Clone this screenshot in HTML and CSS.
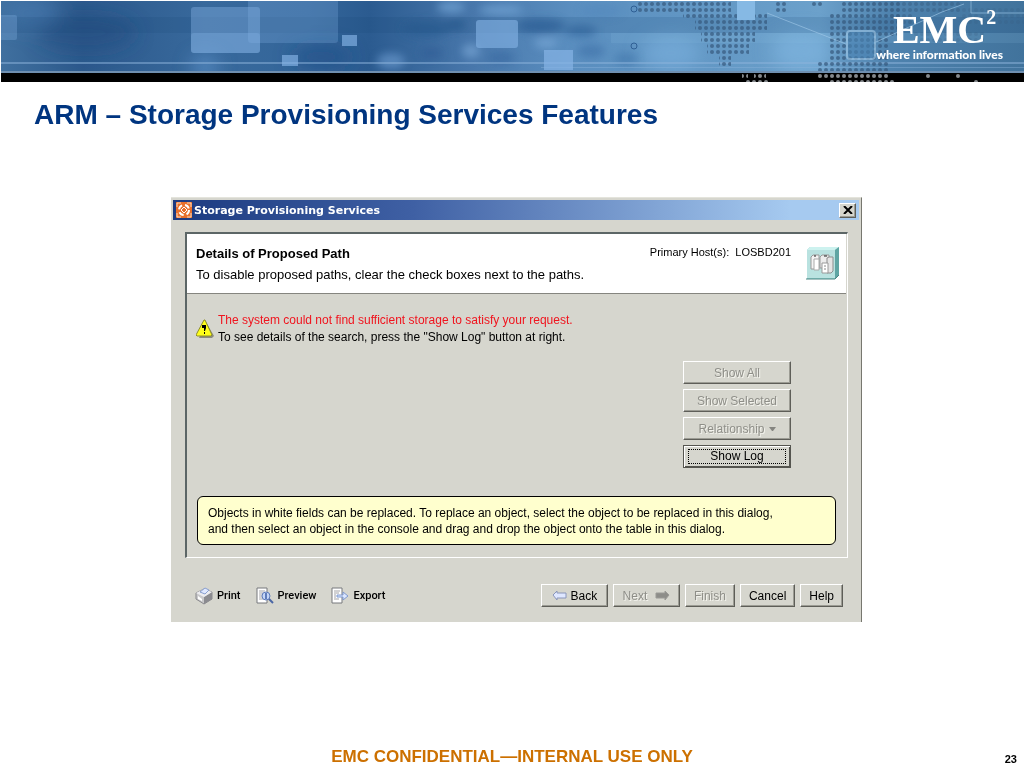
FILE: index.html
```html
<!DOCTYPE html>
<html lang="en">
<head>
    <meta charset="UTF-8">
    <meta name="viewport" content="width=device-width, initial-scale=1.0">
    <title>ARM – Storage Provisioning Services Features</title>
    <link rel="stylesheet" href="styles.css">
</head>
<body>
    <header class="banner">
        <svg class="art" viewBox="0 0 1023 81" preserveAspectRatio="xMaxYMin slice" aria-hidden="true">
            <defs>
                <linearGradient id="sky">
                    <stop offset="0" stop-color="#40709f"/>
                    <stop offset=".08" stop-color="#2c598c"/>
                    <stop offset=".2" stop-color="#38699c"/>
                    <stop offset=".3" stop-color="#34669a"/>
                    <stop offset=".36" stop-color="#2b5b90"/>
                    <stop offset=".46" stop-color="#4877ab"/>
                    <stop offset=".56" stop-color="#5b8fc0"/>
                    <stop offset=".68" stop-color="#6297c4"/>
                    <stop offset=".8" stop-color="#6ca1cb"/>
                    <stop offset=".87" stop-color="#4e82ae"/>
                    <stop offset="1" stop-color="#41739c"/>
                </linearGradient>
                <pattern id="dots" width="6" height="6" patternUnits="userSpaceOnUse">
                    <circle cx="3" cy="3" r="2" fill="#35587c"/>
                </pattern>
                <pattern id="lights" width="6" height="6" patternUnits="userSpaceOnUse">
                    <circle cx="3" cy="3" r="2" fill="#85898d"/>
                </pattern>
                <filter id="soft" x="-50%" y="-50%" width="200%" height="200%"><feGaussianBlur stdDeviation="9"/></filter>
                <filter id="mottle" x="-10%" y="-20%" width="120%" height="140%"><feGaussianBlur stdDeviation="4"/></filter>
            </defs>
            <rect width="1023" height="71" fill="url(#sky)"/>
            <!-- clouds -->
            <g filter="url(#soft)">
                <ellipse cx="30" cy="12" rx="28" ry="16" fill="#4a79b0" opacity=".6"/>
                <ellipse cx="85" cy="32" rx="50" ry="18" fill="#1f4a80" opacity=".5"/>
                <ellipse cx="204" cy="66" rx="14" ry="12" fill="#5c90c8" opacity=".7"/>
                <ellipse cx="320" cy="56" rx="30" ry="12" fill="#1f4d85" opacity=".6"/>
                <ellipse cx="670" cy="52" rx="30" ry="18" fill="#7db2e0" opacity=".6"/>
                <ellipse cx="800" cy="50" rx="30" ry="20" fill="#82b8e2" opacity=".6"/>
            </g>
            <g filter="url(#mottle)" opacity=".7">
                <ellipse cx="390" cy="60" rx="14" ry="8" fill="#6796ca"/>
                <ellipse cx="450" cy="6" rx="14" ry="6" fill="#75a6d6"/>
                <ellipse cx="500" cy="9" rx="22" ry="5" fill="#75a6d6"/>
                <ellipse cx="425" cy="28" rx="24" ry="8" fill="#2b5d93"/>
                <ellipse cx="455" cy="24" rx="10" ry="6" fill="#2b5d93"/>
                <ellipse cx="470" cy="50" rx="9" ry="7" fill="#78a5d4"/>
                <ellipse cx="430" cy="52" rx="12" ry="6" fill="#315f97"/>
                <ellipse cx="500" cy="57" rx="14" ry="6" fill="#3a6ba2"/>
                <ellipse cx="540" cy="25" rx="24" ry="7" fill="#2f619a"/>
                <ellipse cx="580" cy="30" rx="16" ry="6" fill="#34679f"/>
                <ellipse cx="545" cy="42" rx="12" ry="5" fill="#7aa9d8"/>
                <ellipse cx="590" cy="50" rx="14" ry="7" fill="#4274ab"/>
                <ellipse cx="625" cy="58" rx="12" ry="6" fill="#4579ad"/>
                <ellipse cx="600" cy="10" rx="20" ry="6" fill="#5589bd"/>
            </g>
            <rect y="16" width="1023" height="16" fill="#17406f" opacity=".15"/>
            <rect x="610" y="32" width="413" height="10" fill="#8fc0e6" opacity=".15"/>
            <rect y="61" width="1023" height="2" fill="#8db4dc" opacity=".5"/>
            <rect x="540" y="66" width="483" height="1" fill="#8db4dc" opacity=".4"/>
            <!-- floating tiles -->
            <g fill="#86b4e6">
                <rect x="-4" y="14" width="20" height="25" rx="2" opacity=".3"/>
                <rect x="190" y="6" width="69" height="46" rx="3" opacity=".4"/>
                <rect x="190" y="32" width="69" height="20" rx="3" opacity=".3"/>
                <rect x="247" y="-4" width="90" height="46" rx="3" opacity=".26"/>
                <rect x="341" y="34" width="15" height="11" opacity=".65"/>
                <rect x="281" y="54" width="16" height="11" opacity=".65"/>
                <rect x="475" y="19" width="42" height="28" rx="3" opacity=".6"/>
                <rect x="543" y="49" width="29" height="20" opacity=".7"/>
            </g>
            <!-- dotted world map -->
            <g fill="url(#dots)" opacity=".7">
                <path d="M636 0h94v12h36v18h-12v12h-6v12h-18v12h-12v-12h-12v-12h-6v-12h-6v-12h-12v-6h-46z"/>
                <path d="M774 0h12v12h-12zM810 0h12v6h-12zM840 0h60v36h-12v36h-72v-12h12v-48h12z"/>
                <path d="M900 0h60v12h-60zM888 12h24v18h-24z" opacity=".6"/>
            </g>
            <path d="M912 30h72v12h-72zM960 6h63v18h-63z" fill="url(#dots)" opacity=".2"/>
            <rect x="736" y="0" width="18" height="19" fill="#86b9e4"/>
            <g fill="none" stroke="#a3cbea" opacity=".6">
                <path d="M766 12l79 31M875 41l66-30 22-8M970 0v12h53"/>
                <rect x="846" y="30" width="28" height="28" rx="3" fill="#4a83b3" stroke-width="2"/>
            </g>
            <g fill="none" stroke="#2f5f94">
                <circle cx="633" cy="8" r="3"/>
                <circle cx="633" cy="45" r="3"/>
            </g>
            <rect y="71" width="1023" height="10" fill="#000"/>
            <path d="M741 72h6v6h-6zM753 72h12v6h-12zM744 78h24v3h-24zM816 72h72v6h-72zM828 78h66v3h-66zM924 72h6v6h-6zM954 72h6v6h-6zM972 78h6v3h-6z" fill="url(#lights)"/>
            <rect y="70" width="1023" height="2" fill="#6f8fb0"/>
        </svg>
        <div class="brand">
            <div class="brand-name">EMC<sup>2</sup></div>
            <div class="brand-line">where information lives</div>
        </div>
    </header>

    <main>
        <h1>ARM – Storage Provisioning Services Features</h1>

        <section class="dialog" aria-labelledby="dialogTitle">
            <div class="titlebar">
                <svg width="16" height="16" viewBox="0 0 16 16" aria-hidden="true">
                    <rect width="16" height="16" fill="#e8702c"/>
                    <path d="M1 5V1h4M11 1h4v4M15 11v4h-4M5 15H1v-4" fill="none" stroke="#fbd9bd"/>
                    <circle cx="8" cy="8" r="5" fill="none" stroke="#fff" stroke-width="2" stroke-dasharray="5 3"/>
                    <path d="M8 5l3 3-3 3-3-3z" fill="#e8702c" stroke="#fff"/>
                </svg>
                <h2 id="dialogTitle">Storage Provisioning Services</h2>
                <button class="close" type="button" aria-label="Close">
                    <svg width="10" height="8" viewBox="0 0 10 8"><path d="M1 0l8 8M9 0L1 8" stroke="#000" stroke-width="2"/></svg>
                </button>
            </div>

            <div class="panel">
                <div class="panel-head">
                    <div class="intro">
                        <h3>Details of Proposed Path</h3>
                        <p>To disable proposed paths, clear the check boxes next to the paths.</p>
                    </div>
                    <div class="host">Primary Host(s):&nbsp; LOSBD201</div>
                    <svg width="34" height="34" viewBox="0 0 34 34" aria-hidden="true">
                        <path d="M1 4l3-3h29v28l-4 4H1z" fill="#8fcfcb"/>
                        <path d="M1 4l3-3h29l-4 3z" fill="#cdf2ef"/>
                        <path d="M29 4l4-3v28l-4 4z" fill="#5fa5a3"/>
                        <rect x="1" y="4" width="28" height="28" fill="#b9e2e0"/>
                        <path d="M0 33h29l4-4" fill="none" stroke="#4c8583"/>
                        <path d="M5 11l2-2h6v14H5z" fill="#f4f4f4" stroke="#999"/>
                        <path d="M14 11l2-2h7v13h-9z" fill="#ececec" stroke="#999"/>
                        <path d="M8 13h5v11H8z" fill="#fff" stroke="#aaa"/>
                        <path d="M21 12l2-1h4v14l-2 2h-4z" fill="#e4e4e4" stroke="#8d8d8d"/>
                        <path d="M16 17h6v10h-6z" fill="#fff" stroke="#999"/>
                        <path d="M8 10h2M18 10h3" stroke="#222"/>
                        <path d="M18 20h2M18 23h2" stroke="#888"/>
                    </svg>
                </div>

                <div class="message">
                    <svg width="18" height="20" viewBox="0 0 18 20" aria-hidden="true">
                        <path d="M10 3l8 14-2 2H3z" fill="#8b8b80"/>
                        <path d="M8 1h1l7 15-1 1H1l-1-1z" fill="#ffff1a" stroke="#8d8d2a"/>
                        <path d="M6 6h4v3L9 12H8V9H6zM8 13h1v2H8z" fill="#000"/>
                    </svg>
                    <div>
                        <p class="error">The system could not find sufficient storage to satisfy your request.</p>
                        <p>To see details of the search, press the "Show Log" button at right.</p>
                    </div>
                </div>

                <div class="actions">
                    <button type="button" disabled>Show All</button>
                    <button type="button" disabled>Show Selected</button>
                    <button type="button" disabled>Relationship
                        <svg width="7" height="4" viewBox="0 0 7 4" aria-hidden="true"><path d="M0 0h7L4 4H3z" fill="#858580"/></svg>
                    </button>
                    <button class="focused" type="button"><span>Show Log</span></button>
                </div>

                <p class="tip">Objects in white fields can be replaced. To replace an object, select the object to be replaced in this dialog,<br>and then select an object in the console and drag and drop the object onto the table in this dialog.</p>
            </div>

            <div class="bottom">
                <a href="#print">
                    <svg width="18" height="18" viewBox="0 0 18 18" aria-hidden="true">
                        <path d="M1 6l8-4 8 3v7l-8 5-8-5z" fill="#c9c9cb" stroke="#88888c"/>
                        <path d="M9 10l8-5v7l-8 5z" fill="#8b8b90"/>
                        <path d="M1 6l8-4 8 3-8 5z" fill="#ececf0"/>
                        <path d="M5 5l5-4 4 2-4 4z" fill="#dfe8ff" stroke="#8aa0d0"/>
                        <path d="M3 9l4 3v2l-4-2z" fill="#fff"/>
                    </svg>
                    Print
                </a>
                <a href="#preview">
                    <svg width="18" height="18" viewBox="0 0 18 18" aria-hidden="true">
                        <path d="M1 1h10v15H1z" fill="#fff" stroke="#77787c"/>
                        <path d="M3 4h6M3 6h4M3 8h3M3 10h3M3 12h4" stroke="#a4a4a8"/>
                        <circle cx="10" cy="9" r="4" fill="#c5d6f7" stroke="#5f7cba" stroke-width="1"/>
                        <path d="M10 6v6" stroke="#5f7cba" stroke-width="2"/>
                        <path d="M13 12l4 4" stroke="#4a66a5" stroke-width="2"/>
                    </svg>
                    Preview
                </a>
                <a href="#export">
                    <svg width="18" height="18" viewBox="0 0 18 18" aria-hidden="true">
                        <path d="M1 1h10v15H1z" fill="#fff" stroke="#77787c"/>
                        <path d="M3 4h6M3 6h5M3 8h2M3 10h2M3 12h5" stroke="#a4a4a8"/>
                        <path d="M6 8h6V5l5 4-5 4v-3H6z" fill="#dce7ff" stroke="#7f99cf"/>
                    </svg>
                    Export
                </a>
                <div class="wizard">
                    <button class="wide" type="button">
                        <svg width="15" height="9" viewBox="0 0 15 9" aria-hidden="true"><path d="M1 4l4-4v2h9v5H5v2z" fill="#dfe7ff" stroke="#8a96bb"/></svg>
                        Back
                    </button>
                    <button class="wide next" type="button" disabled>
                        Next
                        <svg width="15" height="9" viewBox="0 0 15 9" aria-hidden="true"><path d="M14 4l-4-4v2H1v5h9v2z" fill="#8d8d89" stroke="#9a9a96"/></svg>
                    </button>
                    <button type="button" disabled>Finish</button>
                    <button type="button">Cancel</button>
                    <button type="button">Help</button>
                </div>
            </div>
        </section>
    </main>

    <footer>
        <div class="notice">EMC CONFIDENTIAL—INTERNAL USE ONLY</div>
        <div class="page">23</div>
    </footer>
</body>
</html>
```
FILE: styles.css
```css
* {
    box-sizing: border-box;
}

body {
    margin: 0;
    min-height: 100vh;
    display: flex;
    flex-direction: column;
    background: #fff;
    color: #000;
    font-family: "Liberation Sans", Arial, sans-serif;
    font-size: 12px;
}

h1, h2, h3, p {
    margin: 0;
}

svg {
    display: block;
    flex: none;
}

/* Banner */
.banner {
    display: grid;
    margin: 1px 0 0 1px;
    height: 81px;
}

.art {
    grid-area: 1 / 1;
    width: 100%;
    height: 81px;
}

.brand {
    grid-area: 1 / 1;
    justify-self: end;
    position: relative;
    padding: 10px 21px 0 0;
    color: #fff;
    text-align: center;
}

.brand-name {
    padding-left: 10px;
    font-family: "Liberation Serif", "Times New Roman", serif;
    font-weight: bold;
    font-size: 40px;
    line-height: 38px;
}

.brand-name sup {
    font-size: 20px;
    line-height: 0;
    vertical-align: 19px;
}

.brand-line {
    font-family: Lato, sans-serif;
    font-weight: 900;
    font-size: 12px;
    line-height: 12px;
}

/* Slide */
main {
    flex: 1;
}

h1 {
    margin: 16px 34px 65px;
    color: #003580;
    font-size: 28px;
    line-height: 34px;
}

.dialog {
    margin: 0 162px 0 171px;
    padding: 2px 2px 15px;
    background: #d6d6ce;
    border-top: 1px solid #e4e4dc;
    border-right: 1px solid #77776f;
}

.titlebar {
    display: flex;
    align-items: center;
    gap: 2px;
    height: 20px;
    padding: 0 3px;
    background: linear-gradient(to right, #1c3a80, #3f60a4 35%, #a6caf0 90%);
}

.titlebar h2 {
    flex: 1;
    color: #fff;
    font-family: "DejaVu Sans", Verdana, sans-serif;
    font-size: 11px;
}

button {
    display: flex;
    align-items: center;
    justify-content: center;
    gap: 4px;
    height: 23px;
    padding: 0 8px;
    background: #d6d6ce;
    border: 1px solid;
    border-color: #fff #5e5e58 #5e5e58 #fff;
    box-shadow: inset -1px -1px 0 #9c9c94;
    color: #000;
    font-family: inherit;
    font-size: 12px;
}

button:disabled {
    color: #8e8e88;
    text-shadow: 1px 1px 0 #f4f4ee;
}

.close {
    width: 17px;
    height: 15px;
    padding: 0;
}

.panel {
    margin: 12px 11px 0 12px;
    border: 2px solid;
    border-color: #5c6666 #fff #fff #5c6666;
    border-width: 2px 1px 1px 2px;
}

.panel-head {
    display: flex;
    align-items: flex-start;
    gap: 15px;
    height: 60px;
    margin-right: 1px;
    padding: 12px 6px 0 9px;
    background: #fff;
    border-bottom: 1px solid #85857f;
}

.intro {
    flex: 1;
}

.intro h3 {
    font-size: 13px;
    line-height: 16px;
}

.intro p {
    margin-top: 5px;
    font-size: 13px;
    line-height: 16px;
}

.host {
    font-size: 11px;
    line-height: 13px;
}

.message {
    display: flex;
    align-items: center;
    gap: 4px;
    padding: 18px 9px 0;
    line-height: 17px;
}

.error {
    color: #f0141e;
}

.actions {
    display: flex;
    flex-direction: column;
    align-items: flex-end;
    gap: 5px;
    padding: 15px 56px 0 0;
}

.actions button {
    width: 108px;
}

.actions .focused {
    padding: 2px 4px;
    border-color: #55554f;
    box-shadow: inset 1px 1px 0 #fff, inset -1px -1px 0 #55554f;
}

.focused span {
    flex: 1;
    border: 1px dotted #000;
    line-height: 13px;
}

.tip {
    margin: 28px 11px 12px 10px;
    padding: 8px 10px 7px;
    background: #ffffce;
    border: 1px solid #000;
    border-radius: 6px;
    line-height: 16px;
}

/* Bottom row */
.bottom {
    display: flex;
    align-items: center;
    gap: 15px;
    margin-top: 26px;
    padding: 0 16px 0 22px;
}

.bottom a {
    display: flex;
    align-items: center;
    gap: 4px;
    color: #000;
    font-family: Roboto, sans-serif;
    font-weight: 500;
    font-size: 11px;
    text-decoration: none;
}

.wizard {
    display: flex;
    gap: 5px;
    margin-left: auto;
}

.wide {
    width: 67px;
}

.next {
    gap: 8px;
}

/* Footer */
footer {
    display: grid;
    grid-template-columns: 1fr auto 1fr;
    align-items: end;
    padding: 0 7px;
    font-weight: bold;
}

.notice {
    grid-column: 2;
    color: #cc7000;
    font-size: 17px;
    line-height: 22px;
}

.page {
    justify-self: end;
    font-size: 11px;
    line-height: 18px;
}
```
